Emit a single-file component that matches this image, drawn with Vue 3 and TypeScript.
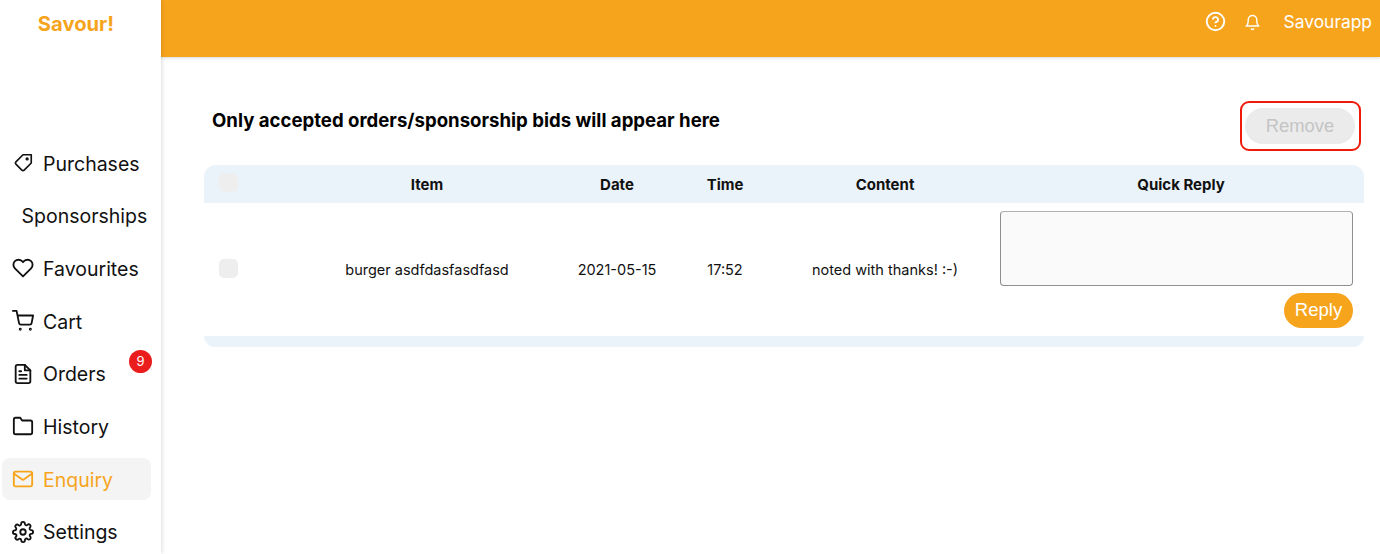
<script setup lang="ts">
interface NavItem {
	id: string;
	label: string;
	badge?: number;
}

const navItems: NavItem[] = [
	{ id: "purchases", label: "Purchases" },
	{ id: "sponsorships", label: "Sponsorships" },
	{ id: "favourites", label: "Favourites" },
	{ id: "cart", label: "Cart" },
	{ id: "orders", label: "Orders", badge: 9 },
	{ id: "history", label: "History" },
	{ id: "enquiry", label: "Enquiry" },
	{ id: "settings", label: "Settings" },
];

const activeId = "enquiry";
</script>

<template>
	<div class="shell">
		<aside class="sidebar">
			<div class="logo">Savour!</div>
			<nav class="nav">
				<a
					v-for="item in navItems"
					:key="item.id"
					class="nav-item"
					:class="{ active: item.id === activeId, bare: item.id === 'sponsorships' }"
				>
					<svg v-if="item.id === 'purchases'" class="icon tag" viewBox="0 0 24 24">
						<path d="M20.59 13.41l-7.17 7.17a2 2 0 0 1-2.83 0L2 12V2h10l8.59 8.59a2 2 0 0 1 0 2.82z" />
						<circle cx="7" cy="7" r="1" />
					</svg>
					<svg v-else-if="item.id === 'favourites'" class="icon" viewBox="0 0 24 24">
						<path d="M20.84 4.61a5.5 5.5 0 0 0-7.78 0L12 5.67l-1.06-1.06a5.5 5.5 0 0 0-7.78 7.78L12 21.23l8.84-8.84a5.5 5.5 0 0 0 0-7.78z" />
					</svg>
					<svg v-else-if="item.id === 'cart'" class="icon" viewBox="0 0 24 24">
						<circle cx="9" cy="21" r="0.6" />
						<circle cx="20" cy="21" r="0.6" />
						<path d="M1 1h4l2.68 13.39a2 2 0 0 0 2 1.61h9.72a2 2 0 0 0 2-1.61L23 6H6" />
					</svg>
					<svg v-else-if="item.id === 'orders'" class="icon" viewBox="0 0 24 24">
						<path d="M14 2H6a2 2 0 0 0-2 2v16a2 2 0 0 0 2 2h12a2 2 0 0 0 2-2V8z" />
						<path d="M14 2v6h6M16 13H8M16 17H8M10 9H8" />
					</svg>
					<svg v-else-if="item.id === 'history'" class="icon" viewBox="0 0 24 24">
						<path d="M22 19a2 2 0 0 1-2 2H4a2 2 0 0 1-2-2V5a2 2 0 0 1 2-2h5l2 3h9a2 2 0 0 1 2 2z" />
					</svg>
					<svg v-else-if="item.id === 'enquiry'" class="icon" viewBox="0 0 24 24">
						<path d="M4 4h16a2 2 0 0 1 2 2v12a2 2 0 0 1-2 2H4a2 2 0 0 1-2-2V6a2 2 0 0 1 2-2z" />
						<path d="M22 6l-10 7L2 6" />
					</svg>
					<svg v-else-if="item.id === 'settings'" class="icon" viewBox="0 0 24 24">
						<circle cx="12" cy="12" r="3" />
						<path d="M19.4 15a1.65 1.65 0 0 0 .33 1.82l.06.06a2 2 0 1 1-2.83 2.83l-.06-.06a1.65 1.65 0 0 0-2.82 1.17V21a2 2 0 1 1-4 0v-.09a1.65 1.65 0 0 0-2.82-1.12l-.06.06a2 2 0 1 1-2.83-2.83l.06-.06a1.65 1.65 0 0 0-1.17-2.82H3a2 2 0 1 1 0-4h.09a1.65 1.65 0 0 0 1.12-2.82l-.06-.06a2 2 0 1 1 2.83-2.83l.06.06a1.65 1.65 0 0 0 1.82.33H9a1.65 1.65 0 0 0 1-1.51V3a2 2 0 1 1 4 0v.09a1.65 1.65 0 0 0 2.82 1.12l.06-.06a2 2 0 1 1 2.83 2.83l-.06.06a1.65 1.65 0 0 0-.33 1.82V9a1.65 1.65 0 0 0 1.51 1H21a2 2 0 1 1 0 4h-.09a1.65 1.65 0 0 0-1.51 1z" />
					</svg>
					<span class="nav-label">{{ item.label }}</span>
					<span v-if="item.badge" class="badge">{{ item.badge }}</span>
				</a>
			</nav>
		</aside>

		<div class="right">
			<header class="topbar">
				<svg class="top-icon help" viewBox="0 0 24 24">
					<circle cx="12" cy="12" r="10" />
					<path d="M9.09 9a3 3 0 0 1 5.83 1c0 2-3 3-3 3" />
					<path d="M12 17h.01" />
				</svg>
				<svg class="top-icon bell" viewBox="0 0 24 24">
					<path d="M18 8A6 6 0 0 0 6 8c0 7-3 9-3 9h18s-3-2-3-9" />
					<path d="M13.73 21a2 2 0 0 1-3.46 0" />
				</svg>
				<span class="user">Savourapp</span>
			</header>

			<main class="content">
				<div class="content-head">
					<h1 class="title">Only accepted orders/sponsorship bids will appear here</h1>
					<div class="highlight">
						<button type="button" class="remove" disabled>Remove</button>
					</div>
				</div>

				<div class="table">
					<div class="row head">
						<div class="cell check"><input type="checkbox" class="box" /></div>
						<div class="cell">Item</div>
						<div class="cell">Date</div>
						<div class="cell">Time</div>
						<div class="cell">Content</div>
						<div class="cell">Quick Reply</div>
					</div>
					<div class="row body">
						<div class="cell check"><input type="checkbox" class="box" /></div>
						<div class="cell">burger asdfdasfasdfasd</div>
						<div class="cell">2021-05-15</div>
						<div class="cell">17:52</div>
						<div class="cell">noted with thanks! :-)</div>
						<div class="cell reply">
							<textarea class="reply-input"></textarea>
							<button type="button" class="reply-btn">Reply</button>
						</div>
					</div>
					<div class="foot"></div>
				</div>
			</main>
		</div>
	</div>
</template>

<style>
html,
body {
	margin: 0;
	background: #fff;
	overflow: hidden;
}
</style>

<style scoped>
.shell {
	display: flex;
	height: 554px;
	font-family: Inter, "Liberation Sans", sans-serif;
	color: #111;
}

.sidebar {
	position: relative;
	z-index: 2;
	flex: 0 0 161px;
	width: 161px;
	background: #fff;
	box-shadow: 1px 0 4px rgba(0, 0, 0, 0.14);
}

.logo {
	padding-top: 12px;
	height: 130px;
	box-sizing: border-box;
	text-align: center;
	font-size: 20.2px;
	line-height: 24px;
	font-weight: 700;
	color: #f7a41d;
	padding-right: 9px;
}

.nav {
	display: flex;
	flex-direction: column;
	gap: 10.7px;
	padding: 12px 10px 0 2px;
}

.nav-item {
	position: relative;
	display: flex;
	align-items: center;
	gap: 9px;
	height: 42px;
	padding-left: 10px;
	border-radius: 8px;
	font-size: 19.5px;
}
.nav-item.active {
	background: #f4f4f4;
	color: #f7a41d;
}
.nav-item.bare {
	padding-left: 19.5px;
}
.nav-label {
	padding-top: 1px;
}

.icon {
	flex: 0 0 22px;
	width: 22px;
	height: 22px;
	fill: none;
	stroke: currentColor;
	stroke-width: 2;
	stroke-linecap: round;
	stroke-linejoin: round;
}
.icon.tag {
	transform: scaleX(-0.9) scaleY(0.9);
}

.badge {
	position: absolute;
	top: -3px;
	right: -1px;
	width: 23px;
	height: 23px;
	display: flex;
	align-items: center;
	justify-content: center;
	border-radius: 50%;
	background: #ea1c1c;
	color: #fff;
	font-size: 13px;
}

.right {
	flex: 1;
	min-width: 0;
	display: flex;
	flex-direction: column;
}

.topbar {
	flex: 0 0 57px;
	display: flex;
	align-items: flex-start;
	justify-content: flex-end;
	background: #f7a41d;
	box-shadow: 0 1px 3px rgba(0, 0, 0, 0.16);
	color: #fff;
	padding: 12px 8px 0 0;
	box-sizing: border-box;
}

.top-icon {
	fill: none;
	stroke: #fff;
	stroke-width: 2;
	stroke-linecap: round;
	stroke-linejoin: round;
}
.help {
	width: 21px;
	height: 21px;
	margin: -1px 18px 0 0;
	stroke-width: 2.2;
}
.bell {
	width: 17px;
	height: 17px;
	margin: 2px 23px 0 0;
}
.user {
	font-size: 17.4px;
	line-height: 20px;
}

.content {
	padding: 44px 16px 0 43px;
}

.content-head {
	display: flex;
	align-items: center;
	justify-content: space-between;
	padding: 0 3px 0 8px;
}

.title {
	margin: 0 0 12px;
	font-size: 18.6px;
	line-height: 26px;
	font-weight: 700;
	color: #000;
}

.highlight {
	border: 2px solid #f01a0a;
	border-radius: 9px;
	padding: 5px 4px 5px 3px;
}

.remove {
	display: block;
	width: 110px;
	height: 36px;
	border: 0;
	border-radius: 18px;
	background: #ebebeb;
	color: #c4c4c4;
	font: 18.4px "Liberation Sans", Arial, sans-serif;
}

.table {
	margin-top: 14px;
	font-size: 14.5px;
}

.row {
	display: grid;
	grid-template-columns: 94px 258px 122px 94px 226px 366px;
}

.cell {
	display: flex;
	align-items: center;
	justify-content: center;
	text-align: center;
}
.cell.check {
	justify-content: flex-start;
	padding-left: 15px;
}

.head {
	height: 38px;
	background: #ebf3fa;
	border-radius: 12px 12px 0 0;
	font-size: 15px;
	font-weight: 700;
}

.body {
	height: 133px;
}

.box {
	appearance: none;
	width: 19px;
	height: 19px;
	margin: -3px 0 0;
	border-radius: 5px;
	background: #eeeeee;
}

.reply {
	flex-direction: column;
	align-items: flex-end;
	justify-content: flex-start;
	padding: 8px 11px 0 2px;
}

.reply-input {
	display: block;
	width: 100%;
	height: 75px;
	box-sizing: border-box;
	border: 1px solid #8f8f8f;
	border-top-color: #b0b0b0;
	border-radius: 4px;
	background: #fafafa;
	resize: none;
}

.reply-btn {
	width: 69px;
	height: 35px;
	margin-top: 7px;
	padding: 0 0 2px;
	border: 0;
	border-radius: 18px;
	background: #f7a41d;
	color: #fff;
	font: 18.5px "Liberation Sans", Arial, sans-serif;
}

.foot {
	height: 11px;
	background: #ebf3fa;
	border-radius: 0 0 12px 12px;
}
</style>
